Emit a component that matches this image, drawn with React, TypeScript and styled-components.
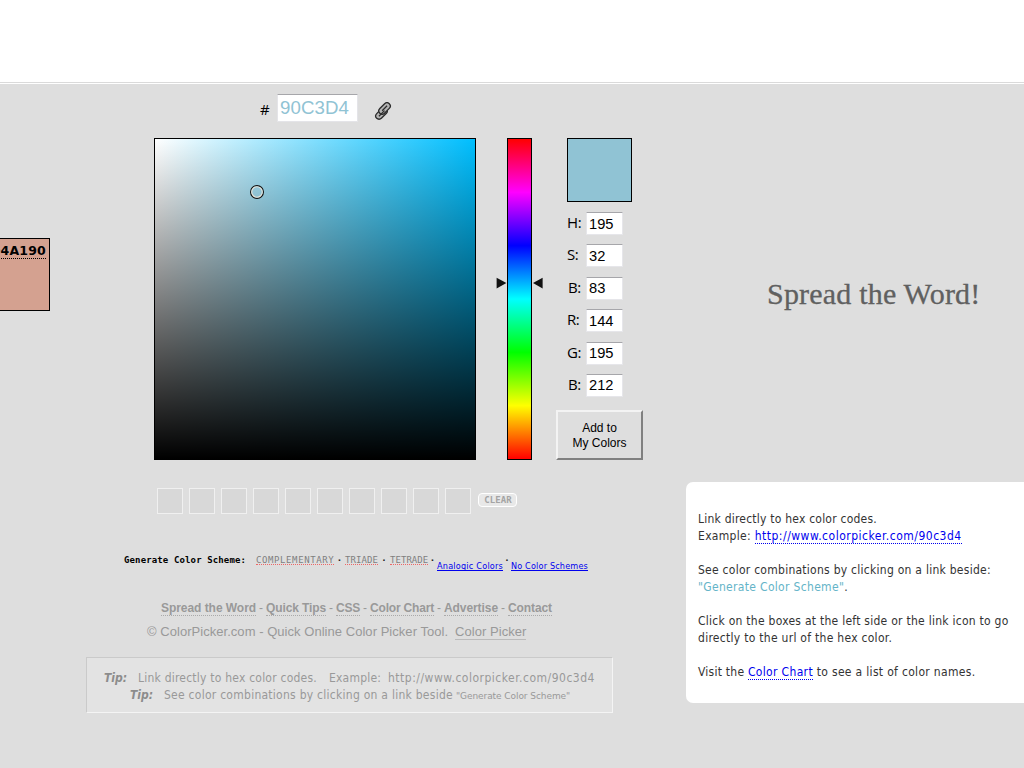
import React from 'react';
import styled, { createGlobalStyle } from 'styled-components';

const tahoma = '"DejaVu Sans Condensed", "DejaVu Sans", sans-serif';
const arial = '"Liberation Sans", Arial, sans-serif';

const GlobalStyle = createGlobalStyle`
  * { box-sizing: border-box; }
  body { margin: 0; background: #dedede; }
`;

const Page = styled.div`
  width: 1024px;
  height: 768px;
  overflow: hidden;
  background: #dedede;
  font: 12px/17px ${tahoma};
  white-space: nowrap;
`;

const Banner = styled.header`
  height: 84px;
  background: #fff;
  padding-top: 82px;
  &::after { content: ''; display: block; height: 1px; background: #dadada; }
`;

const Columns = styled.div`display: flex; height: 684px;`;
const Main = styled.main`flex: 0 0 686px;`;
const Aside = styled.aside`flex: 1; display: flex; flex-direction: column;`;

const HexRow = styled.div`
  display: flex;
  height: 54px;
  padding: 10px 0 0 260px;
`;
const Hash = styled.span`width: 17px; font: 15px/30px "Open Sans", sans-serif; color: #000;`;
const HexInput = styled.input`
  width: 81px;
  height: 28px;
  padding: 0 0 0 2px;
  border: 1px solid #e4e4e8;
  border-top-color: #a6a6aa;
  border-radius: 1px;
  background: #fff;
  color: #90c3d4;
  font: 18.67px ${arial};
  letter-spacing: 0.1px;
`;
const ChainIcon = styled.svg`width: 18px; height: 18px; margin: 8px 0 0 16px;`;

const PickerRow = styled.div`display: flex; height: 322px;`;
const SchemeSwatch = styled.div`
  display: flex;
  justify-content: flex-end;
  width: 50px;
  height: 73px;
  margin: 100px 104px 0 0;
  padding: 4px 3px 0 0;
  overflow: hidden;
  border: 1px solid #000;
  border-left: 0;
  background: #d4a190;
`;
const SwatchCode = styled.span`
  height: 16px;
  border-bottom: 1px dotted #000;
  color: #000;
  font: bold 12.5px/16px "DejaVu Sans", sans-serif;
  letter-spacing: 0.2px;
`;
const ColorField = styled.div`
  position: relative;
  width: 322px;
  border: 1px solid #000;
  background: linear-gradient(to bottom, transparent, #000), linear-gradient(to right, #fff, #00bfff);
`;
const Marker = styled.svg`position: absolute; left: 95px; top: 46px; width: 14px; height: 14px;`;
const HueGroup = styled.div`
  display: flex;
  margin-left: 20px;
  width: 71px;
`;
const HueBar = styled.div`
  width: 25px;
  border: 1px solid #000;
  background: linear-gradient(#f00, #f0f, #00f, #0ff, #0f0, #ff0, #f00);
`;
const Arrow = styled.svg`width: 11px; height: 12px; margin-top: 139px;`;

const Values = styled.div`width: 100px;`;
const Preview = styled.div`
  width: 65px;
  height: 64px;
  border: 1px solid #000;
  background: #90c3d4;
`;
const Fields = styled.div`
  display: grid;
  grid-template-columns: 19px 37px;
  grid-auto-rows: 32.4px;
  padding-top: 10px;
  height: 208px;
`;
const FieldLabel = styled.label<{ $indent?: boolean }>`
  padding-left: ${p => (p.$indent ? 1 : 0)}px;
  color: #000;
  font: 15px/20px "Open Sans", sans-serif;
  letter-spacing: -0.4px;
`;
const FieldInput = styled.input`
  width: 37px;
  height: 23px;
  padding: 0 0 0 2px;
  border: 1px solid #e6e6ea;
  border-top-color: #a6a6aa;
  border-radius: 1px;
  background: #fff;
  color: #000;
  font: 14.67px ${arial};
`;
const AddButton = styled.button`
  display: block;
  width: 87px;
  height: 50px;
  margin-left: -11px;
  padding: 1px 0 0;
  border: 2px solid;
  border-color: #f3f3f3 #808080 #808080 #f3f3f3;
  background: #dedede;
  color: #000;
  font: 12px/15px ${arial};
`;

const SavedRow = styled.div`
  display: flex;
  gap: 6px;
  height: 54px;
  padding: 28px 0 0 157px;
`;
const Saved = styled.div`
  width: 26px;
  height: 26px;
  border: 1px solid #f0f0f0;
  background: #d8d8d8;
`;
const Clear = styled.button`
  width: 39px;
  height: 14px;
  margin: 5px 0 0 1px;
  padding: 0 0 0 1px;
  border: 1px solid #fff;
  border-radius: 4px;
  background: #e8e8e8;
  color: #a4a4a4;
  font: bold 9px/12px "DejaVu Sans Mono", monospace;
  letter-spacing: 0.1px;
`;

const SchemeRow = styled.div`
  display: flex;
  height: 83px;
  padding: 41px 0 0 124px;
  font: 9px/11px "DejaVu Sans Mono", monospace;
`;
const SchemeTitle = styled.strong`width: 132px; letter-spacing: 0.13px; color: #000;`;
const PixelLink = styled.a<{ $w: number; $ls: number }>`
  width: ${p => p.$w}px;
  height: 10px;
  border-bottom: 1px dotted #e66;
  color: #808080;
  letter-spacing: ${p => p.$ls}px;
`;
const Dot = styled.span<{ $w: number }>`
  width: ${p => p.$w}px;
  text-align: center;
  color: #222;
  font-weight: bold;
`;
const SmallLink = styled.a<{ $w: number; $ls: number }>`
  width: ${p => p.$w}px;
  height: 11px;
  margin-top: 5px;
  border-bottom: 1px solid #00e;
  color: #00e;
  font: 9px/12px ${tahoma};
  letter-spacing: ${p => p.$ls}px;
`;

const FooterNav = styled.nav`
  display: flex;
  height: 23px;
  padding: 3px 0 0 161px;
  color: #999;
  font: 12px/17px ${arial};
`;
const FooterLink = styled.a<{ $w: number; $ls: number }>`
  width: ${p => p.$w}px;
  height: 16px;
  border-bottom: 1px dotted #aaa;
  color: #999;
  font-weight: bold;
  letter-spacing: ${p => p.$ls}px;
`;
const Dash = styled.span`width: 10px; text-align: center;`;
const Copyright = styled.p`
  display: flex;
  height: 37px;
  margin: 0;
  padding: 3px 0 0 147px;
  color: #999;
  font: 13px/17px ${arial};
  letter-spacing: 0.04px;
`;
const PlainLink = styled.a`height: 17px; margin-left: 7px; border-bottom: 1px solid #bbb;`;

const TipBox = styled.section`
  width: 527px;
  height: 56px;
  margin-left: 86px;
  padding-top: 12px;
  border: 1px solid;
  border-color: #cacaca #f4f4f4 #f4f4f4 #cacaca;
  background: #e3e3e3;
  color: #999;
`;
const TipLine = styled.p<{ $indent: number; $ls: number }>`
  display: flex;
  margin: 0;
  padding-left: ${p => p.$indent}px;
  letter-spacing: ${p => p.$ls}px;
`;
const TipTag = styled.em`width: 34px; font-weight: bold; letter-spacing: 0; color: #8c8c8c;`;
const TipPart = styled.span<{ $w: number; $ls: number }>`width: ${p => p.$w}px; letter-spacing: ${p => p.$ls}px;`;
const TipSmall = styled.small`font: 9px/18px "DejaVu Sans", sans-serif; letter-spacing: -0.07px;`;

const Heading = styled.h2`
  height: 398px;
  margin: 0;
  padding: 193px 0 0 81px;
  color: #606060;
  font: 30px/34px "Liberation Serif", "Times New Roman", serif;
  letter-spacing: 0.2px;
  -webkit-text-stroke: 0.3px #606060;
`;
const Card = styled.section`
  height: 221px;
  padding: 29px 0 0 12px;
  border-radius: 7px 0 0 7px;
  background: #fff;
  color: #333;
`;
const CardText = styled.p`
  margin: 0 0 17px;
`;
const CardLine = styled.span<{ $ls: number }>`
  display: flex;
  height: 17px;
  letter-spacing: ${p => p.$ls}px;
  white-space: pre;
`;
const CardLink = styled.a<{ $ls: number }>`
  height: 16px;
  border-bottom: 1px dotted #00e;
  color: #00e;
  letter-spacing: ${p => p.$ls}px;
`;
const CardTail = styled.span`letter-spacing: 0.32px;`;
const Accent = styled.span`color: #64b4c8; letter-spacing: 0.32px;`;

const fields = [
  ['H', '195'], ['S', '32'], ['B', '83'], ['R', '144'], ['G', '195'], ['B', '212'],
];

const footerLinks: [string, number, number][] = [
  ['Spread the Word', 95, -0.05],
  ['Quick Tips', 60, -0.11],
  ['CSS', 24, -0.2],
  ['Color Chart', 64, -0.18],
  ['Advertise', 54, -0.08],
  ['Contact', 44, -0.1],
];

export default function App() {
  return (
    <Page>
      <GlobalStyle />
      <Banner />
      <Columns>
        <Main>
          <HexRow>
            <Hash>#</Hash>
            <HexInput defaultValue="90C3D4" />
            <ChainIcon viewBox="0 0 18 18" fill="none" stroke="#2c2c2c">
              <g transform="rotate(-45 9 9)">
                <rect x="-0.6" y="6.4" width="13.4" height="6.6" rx="3.3" fill="#b4b4b4" strokeWidth="1.3" />
                <rect x="5.2" y="5" width="13.4" height="6.6" rx="3.3" fill="#b4b4b4" strokeWidth="1.3" />
                <path d="M2.4 9.8h8M8.6 8.2h7" strokeWidth="1.2" />
              </g>
            </ChainIcon>
          </HexRow>

          <PickerRow>
            <SchemeSwatch><SwatchCode>D4A190</SwatchCode></SchemeSwatch>
            <ColorField>
              <Marker viewBox="0 0 14 14" fill="none">
                <circle cx="7" cy="7" r="6.4" stroke="#111" strokeWidth="1.2" />
                <circle cx="7" cy="7" r="5.3" stroke="#e8e4da" strokeWidth="1.1" />
              </Marker>
            </ColorField>
            <HueGroup>
              <Arrow viewBox="0 0 11 12"><path d="M0.6 0.8L10.4 6L0.6 11.4Z" fill="#111" /></Arrow>
              <HueBar />
              <Arrow viewBox="0 0 11 12"><path d="M10.6 0.8L1 6L10.6 11.4Z" fill="#111" /></Arrow>
            </HueGroup>
            <Values>
              <Preview />
              <Fields>
                {fields.map(([label, value], i) => (
                  <React.Fragment key={i}>
                    <FieldLabel $indent={label === 'B'}>{label}:</FieldLabel>
                    <FieldInput defaultValue={value} />
                  </React.Fragment>
                ))}
              </Fields>
              <AddButton>Add to<br />My Colors</AddButton>
            </Values>
          </PickerRow>

          <SavedRow>
            {Array.from({ length: 10 }, (_, i) => <Saved key={i} />)}
            <Clear>CLEAR</Clear>
          </SavedRow>

          <SchemeRow>
            <SchemeTitle>Generate Color Scheme:</SchemeTitle>
            <PixelLink $w={78} $ls={0.6}>COMPLEMENTARY</PixelLink>
            <Dot $w={11}>·</Dot>
            <PixelLink $w={33} $ls={0.1}>TRIADE</PixelLink>
            <Dot $w={12}>·</Dot>
            <PixelLink $w={38} $ls={0.05}>TETRADE</PixelLink>
            <Dot $w={9}>·</Dot>
            <SmallLink $w={66} $ls={0.23}>Analogic Colors</SmallLink>
            <Dot $w={8}>·</Dot>
            <SmallLink $w={77} $ls={0.18}>No Color Schemes</SmallLink>
          </SchemeRow>

          <FooterNav>
            {footerLinks.map(([label, w, ls], i) => (
              <React.Fragment key={label}>
                {i > 0 && <Dash>-</Dash>}
                <FooterLink $w={w} $ls={ls}>{label}</FooterLink>
              </React.Fragment>
            ))}
          </FooterNav>
          <Copyright>
            <span>© ColorPicker.com - Quick Online Color Picker Tool.</span>
            <PlainLink>Color Picker</PlainLink>
          </Copyright>

          <TipBox>
            <TipLine $indent={17} $ls={0.22}>
              <TipTag>Tip:</TipTag>
              <TipPart $w={191} $ls={0.22}>Link directly to hex color codes.</TipPart>
              <TipPart $w={59} $ls={0.2}>Example:</TipPart>
              <TipPart $w={207} $ls={0.5}>http://www.colorpicker.com/90c3d4</TipPart>
            </TipLine>
            <TipLine $indent={43} $ls={0.26}>
              <TipTag>Tip:</TipTag>
              <TipPart $w={292} $ls={0.26}>See color combinations by clicking on a link beside</TipPart>
              <TipSmall>"Generate Color Scheme"</TipSmall>
            </TipLine>
          </TipBox>
        </Main>

        <Aside>
          <Heading>Spread the Word!</Heading>
          <Card>
            <CardText>
              <CardLine $ls={0.22}>Link directly to hex color codes.</CardLine>
              <CardLine $ls={0.31}>Example: <CardLink $ls={0.5}>http://www.colorpicker.com/90c3d4</CardLink></CardLine>
            </CardText>
            <CardText>
              <CardLine $ls={0.26}>See color combinations by clicking on a link beside:</CardLine>
              <CardLine $ls={0.26}><Accent>"Generate Color Scheme"</Accent>.</CardLine>
            </CardText>
            <CardText>
              <CardLine $ls={0.26}>Click on the boxes at the left side or the link icon to go</CardLine>
              <CardLine $ls={0.28}>directly to the url of the hex color.</CardLine>
            </CardText>
            <CardText>
              <CardLine $ls={0.24}>Visit the <CardLink $ls={0.34}>Color Chart</CardLink><CardTail> to see a list of color names.</CardTail></CardLine>
            </CardText>
          </Card>
        </Aside>
      </Columns>
    </Page>
  );
}
